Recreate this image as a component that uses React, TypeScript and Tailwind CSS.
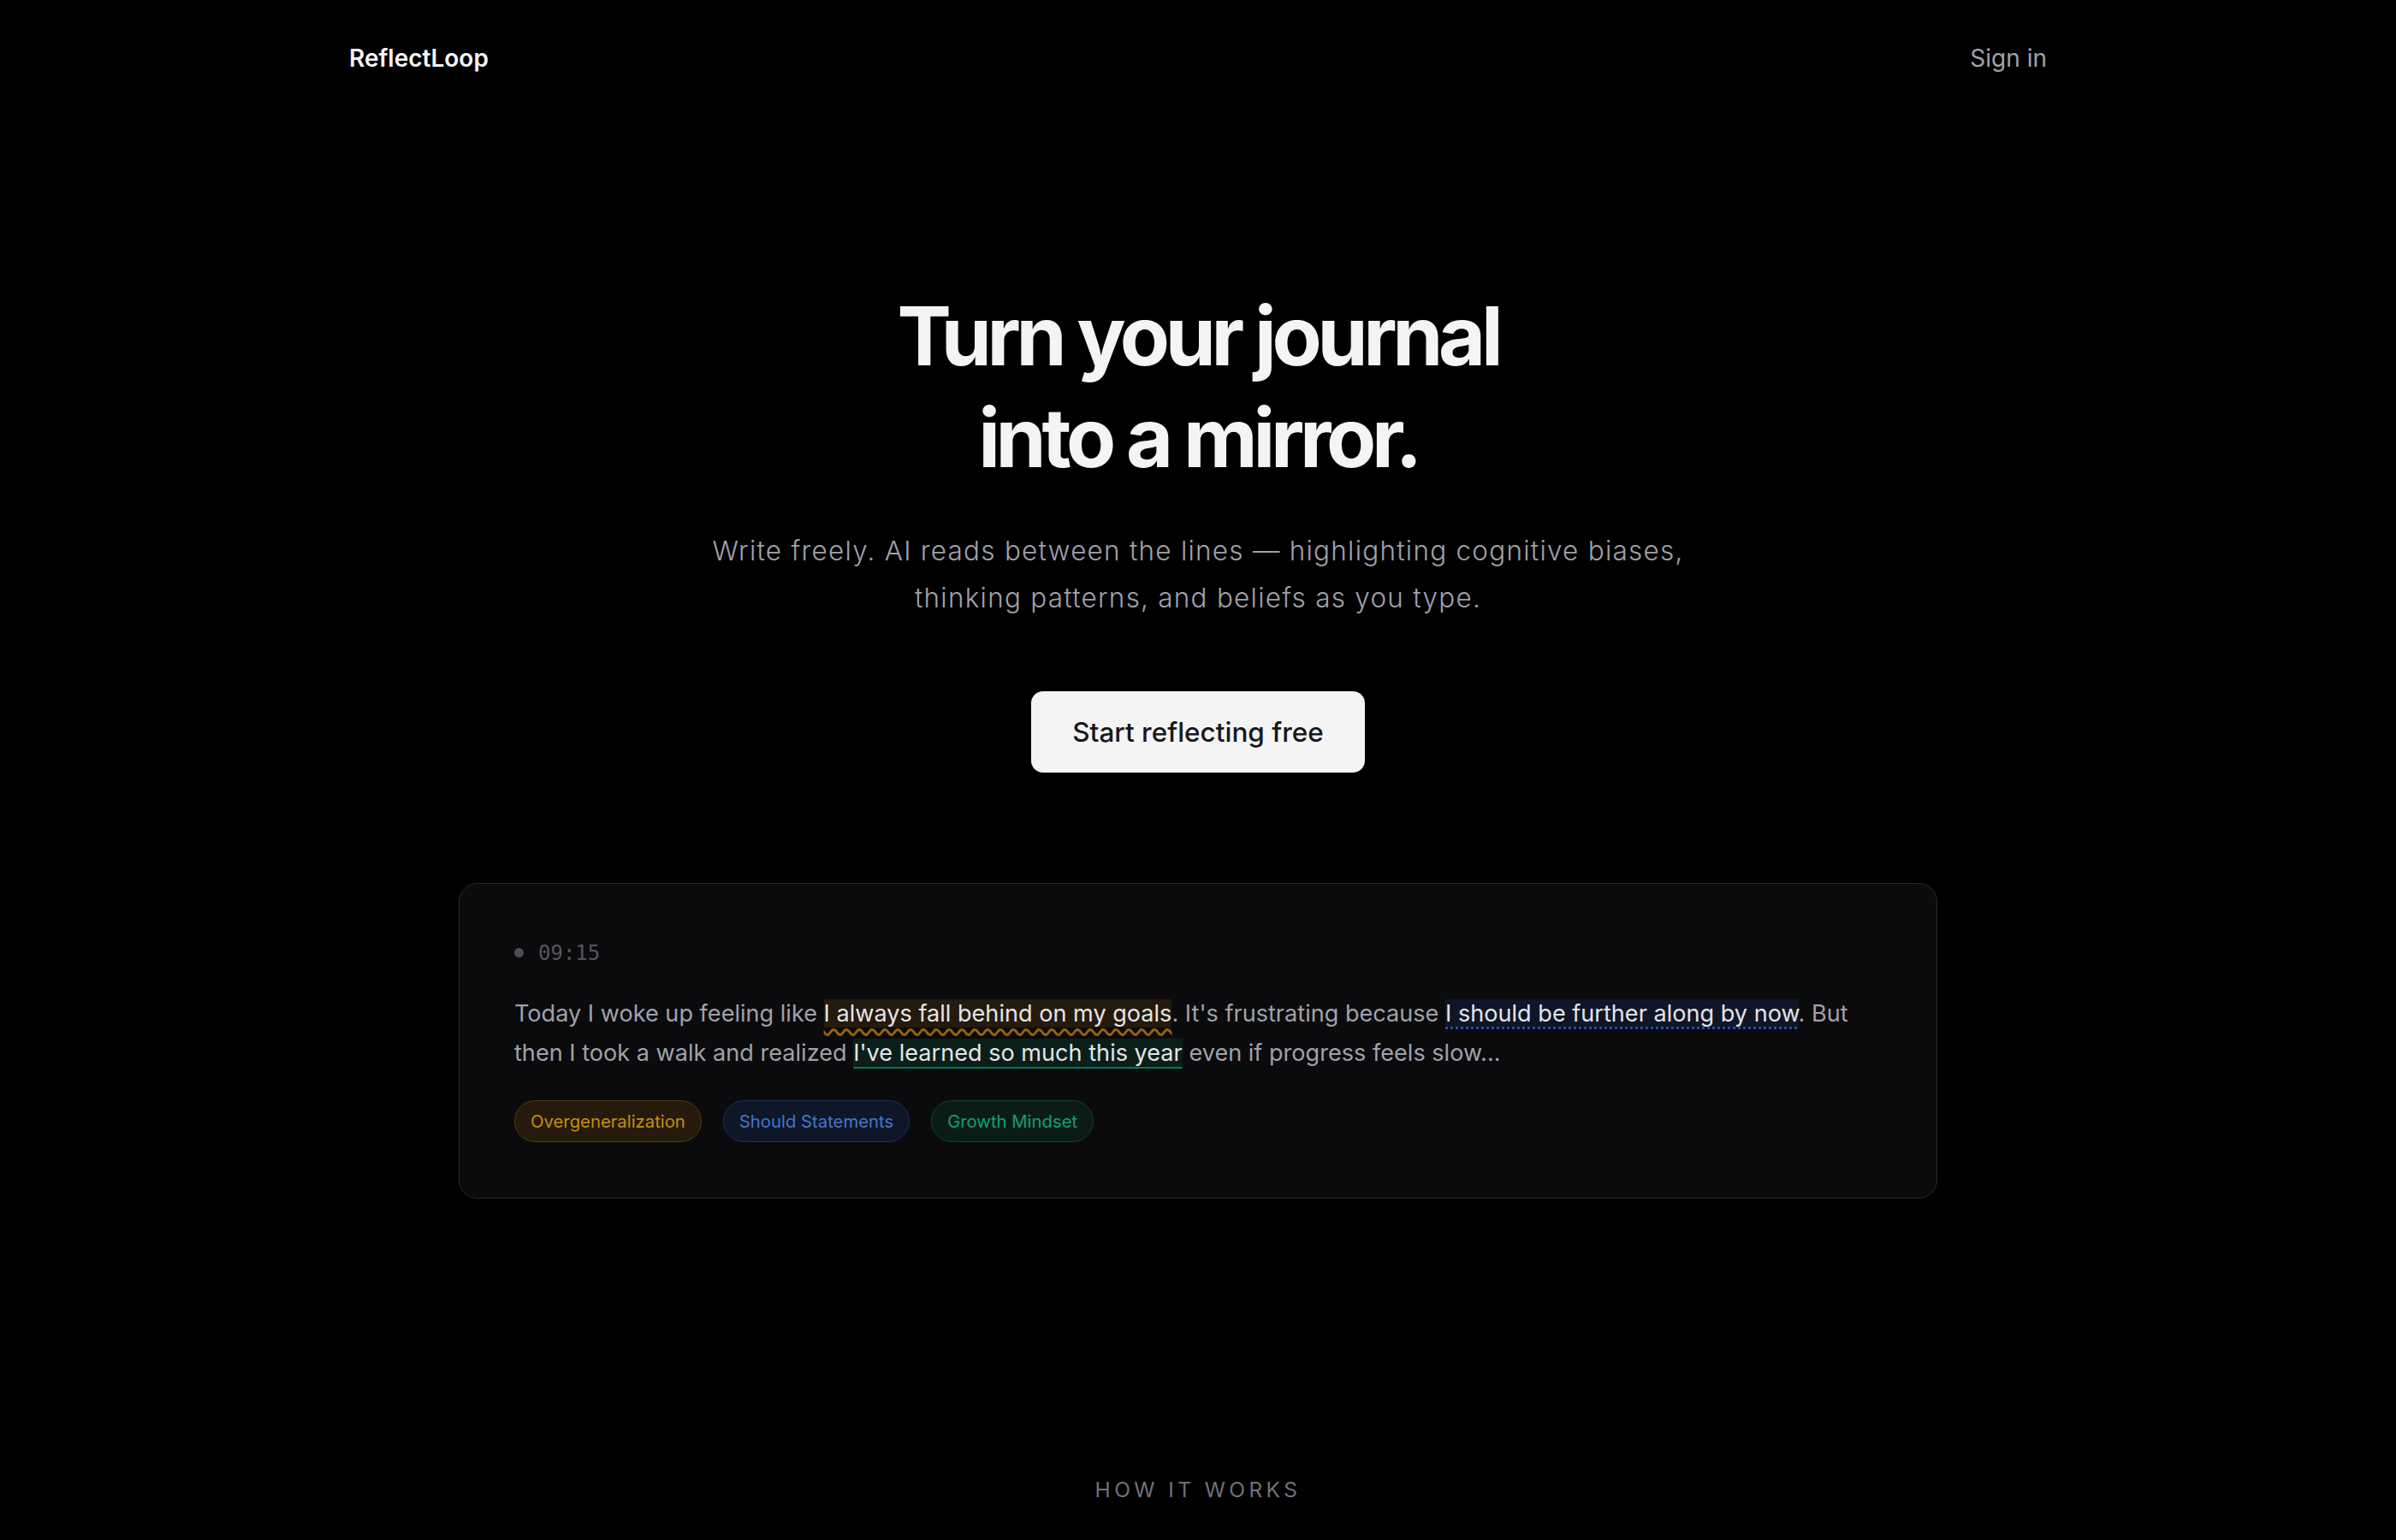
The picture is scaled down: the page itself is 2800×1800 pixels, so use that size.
const tags = [
  {
    label: "Overgeneralization",
    cls: "bg-[#251a0b] border-[#55390c] text-[#c98e0f]",
  },
  {
    label: "Should Statements",
    cls: "bg-[#0e1627] border-[#1c3059] text-[#3f79c8]",
  },
  {
    label: "Growth Mindset",
    cls: "bg-[#0b1c17] border-[#114030] text-[#14a06f]",
  },
];

export default function App() {
  return (
    <div className="min-h-screen bg-black font-['Inter','Noto_Sans',sans-serif] text-[#f4f4f5] antialiased">
      <header className="mx-auto flex w-[1984px] items-center justify-between pt-[47px]">
        <span className="text-[28px] font-semibold leading-[42px] text-[#f4f4f5]">ReflectLoop</span>
        <a href="#" className="text-[28px] leading-[42px] text-[#a1a1aa]">
          Sign in
        </a>
      </header>

      <main className="flex flex-col items-center">
        <h1 className="mt-[244px] text-center text-[95px] font-bold leading-[119px] tracking-[-0.056em] text-[#f4f4f5]">
          Turn your journal
          <br />
          into a mirror.
        </h1>

        <p className="mt-[45px] text-center text-[31.5px] font-light leading-[55px] tracking-[0.039em] text-[#a1a1aa]">
          Write freely. AI reads between the lines — highlighting cognitive biases,
          <br />
          thinking patterns, and beliefs as you type.
        </p>

        <button className="mt-[82px] flex h-[95px] items-center rounded-[14px] bg-[#f4f4f5] px-[48px] text-[31.5px] font-medium text-[#18181b]">
          Start reflecting free
        </button>

        {/* live journal preview */}
        <section className="mt-[129px] w-[1728px] rounded-[22px] border border-[#2a2a2d] bg-[#0b0b0d] px-[64px] pt-[64px] pb-[65px]">
          <div className="mb-[32px] flex h-[33px] items-center gap-[17px]">
            <span className="h-[11px] w-[11px] rounded-full bg-[#4d4d54]" />
            <span className="font-['DejaVu_Sans_Mono',monospace] text-[24px] text-[#56565e]">09:15</span>
          </div>

          <p className="text-[27.1px] leading-[46px] text-[#a1a1aa]">
            Today I woke up feeling like{" "}
            <span className="bg-[#241a0d] text-[#e4e4e7] underline decoration-[#9c600a] decoration-wavy decoration-[3px] underline-offset-[8px]">
              I always fall behind on my goals
            </span>
            . It's frustrating because{" "}
            <span className="bg-[#0e1627] text-[#e4e4e7] underline decoration-[#1f4fb5] decoration-dotted decoration-[3px] underline-offset-[6px]">
              I should be further along by now
            </span>
            . But then I took a walk and realized{" "}
            <span className="bg-[#0a1f1a] text-[#e4e4e7] underline decoration-[#047857] decoration-[2px] underline-offset-[7px]">
              I've learned so much this year
            </span>{" "}
            even if progress feels slow...
          </p>

          <div className="mt-[32px] flex gap-[25px]">
            {tags.map((t) => (
              <span
                key={t.label}
                className={`rounded-full border px-[18px] py-[9px] text-[20.3px] leading-[29px] ${t.cls}`}
              >
                {t.label}
              </span>
            ))}
          </div>
        </section>

        <section className="mt-[322px] pb-[200px]">
          <h2 className="text-[24.5px] uppercase tracking-[0.18em] text-[#71717a]">How it works</h2>
        </section>
      </main>
    </div>
  );
}
